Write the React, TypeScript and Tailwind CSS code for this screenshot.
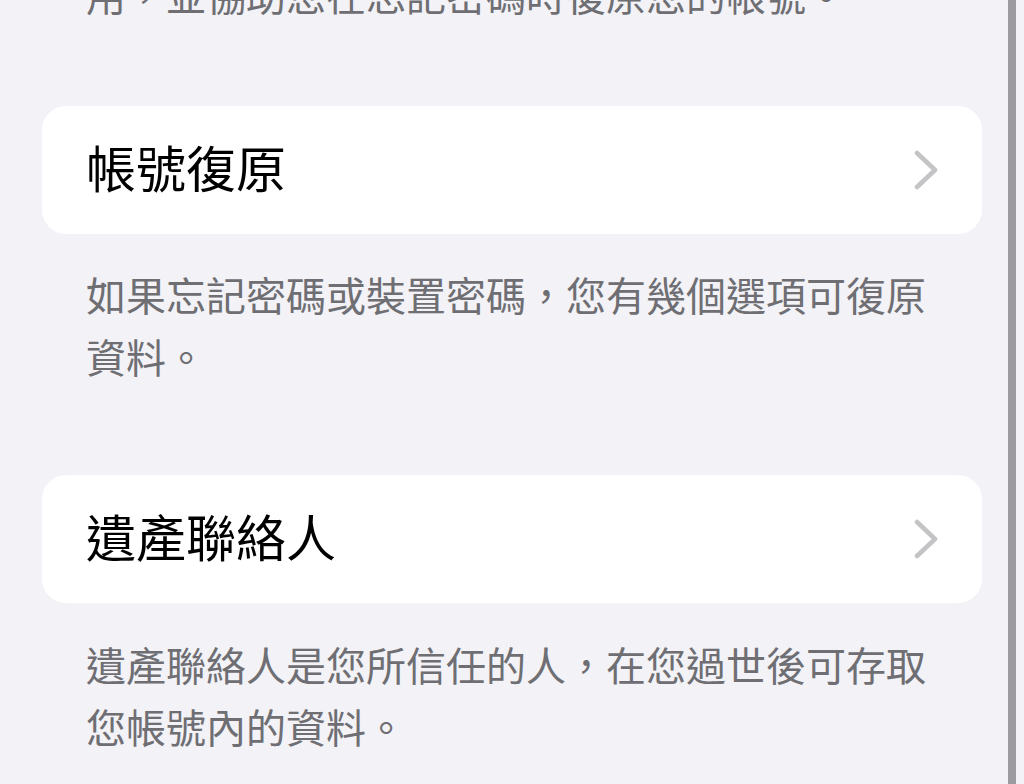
import React from "react";

const Chevron = () => (
  <svg width="24" height="40" viewBox="0 0 24 40" fill="none" className="shrink-0">
    <polyline points="3,3 21,20 3,37" stroke="#c4c4c7" strokeWidth="4.5" strokeLinecap="round" strokeLinejoin="round" />
  </svg>
);

const Card = ({ title }: { title: string }) => (
  <div className="h-[128px] rounded-[24px] bg-white flex items-center justify-between pl-[44px] pr-[44px]">
    <span className="text-[50px] leading-none text-black pb-[8px]">{title}</span>
    <Chevron />
  </div>
);

const Footer = ({ lines, className }: { lines: string[]; className?: string }) => (
  <div className={"px-[44px] text-[40px] leading-[62px] text-[#6e6e73] " + (className ?? "")}>
    {lines.map((l, i) => (
      <div key={i} className="whitespace-nowrap">{l}</div>
    ))}
  </div>
);

export default function App() {
  return (
    <div
      className="relative w-[1024px] h-[784px] overflow-hidden bg-[#f2f2f7]"
      style={{ fontFamily: '"Noto Sans CJK TC", "Noto Sans", sans-serif' }}
    >
      <div className="px-[42px]">
        <Footer className="mt-[-37px]" lines={["用，並協助您在忘記密碼時復原您的帳號。"]} />
        <div className="mt-[81px]">
          <Card title="帳號復原" />
        </div>
        <Footer
          className="mt-[29px]"
          lines={["如果忘記密碼或裝置密碼，您有幾個選項可復原", "資料。"]}
        />
        <div className="mt-[88px]">
          <Card title="遺產聯絡人" />
        </div>
        <Footer
          className="mt-[30px]"
          lines={["遺產聯絡人是您所信任的人，在您過世後可存取", "您帳號內的資料。"]}
        />
      </div>
      <div className="absolute top-0 bottom-0 right-[8px] w-[8px] bg-[#9b9ba0]" />
    </div>
  );
}
